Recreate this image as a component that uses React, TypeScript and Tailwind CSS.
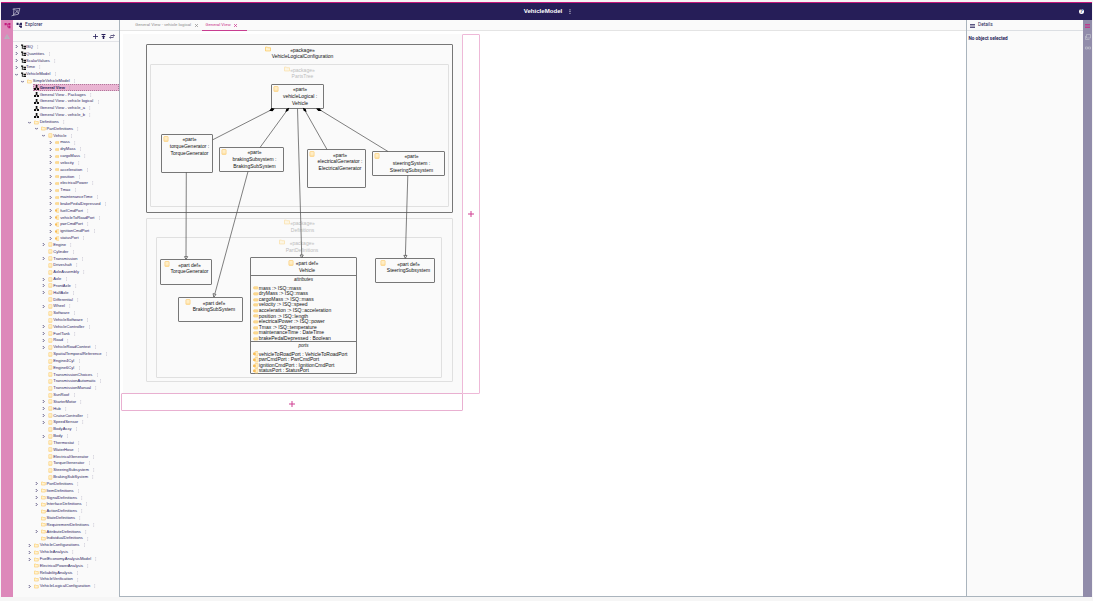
import type { ReactNode } from "react";

type IconKind = "project" | "diagram" | "folder" | "def" | "attribute" | "port";
type Row = [depth: number, icon: IconKind, expand: "" | ">" | "v", label: string];

const rows: Row[] = [
  [0, "project", ">", "ISQ"],
  [0, "project", ">", "Quantities"],
  [0, "project", ">", "ScalarValues"],
  [0, "project", ">", "Time"],
  [0, "project", "v", "VehicleModel"],
  [1, "folder", "v", "SimpleVehicleModel"],
  [2, "diagram", "", "General View"],
  [2, "diagram", "", "General View - Packages"],
  [2, "diagram", "", "General View - vehicle logical"],
  [2, "diagram", "", "General View - vehicle_a"],
  [2, "diagram", "", "General View - vehicle_b"],
  [2, "folder", "v", "Definitions"],
  [3, "folder", "v", "PartDefinitions"],
  [4, "def", "v", "Vehicle"],
  [5, "attribute", ">", "mass"],
  [5, "attribute", ">", "dryMass"],
  [5, "attribute", ">", "cargoMass"],
  [5, "attribute", ">", "velocity"],
  [5, "attribute", ">", "acceleration"],
  [5, "attribute", ">", "position"],
  [5, "attribute", ">", "electricalPower"],
  [5, "attribute", ">", "Tmax"],
  [5, "attribute", ">", "maintenanceTime"],
  [5, "attribute", ">", "brakePedalDepressed"],
  [5, "port", ">", "fuelCmdPort"],
  [5, "port", ">", "vehicleToRoadPort"],
  [5, "port", ">", "pwrCmdPort"],
  [5, "port", ">", "ignitionCmdPort"],
  [5, "port", ">", "statusPort"],
  [4, "def", ">", "Engine"],
  [4, "def", "", "Cylinder"],
  [4, "def", ">", "Transmission"],
  [4, "def", "", "Driveshaft"],
  [4, "def", "", "AxleAssembly"],
  [4, "def", ">", "Axle"],
  [4, "def", ">", "FrontAxle"],
  [4, "def", ">", "HalfAxle"],
  [4, "def", "", "Differential"],
  [4, "def", ">", "Wheel"],
  [4, "def", "", "Software"],
  [4, "def", "", "VehicleSoftware"],
  [4, "def", ">", "VehicleController"],
  [4, "def", ">", "FuelTank"],
  [4, "def", ">", "Road"],
  [4, "def", ">", "VehicleRoadContext"],
  [4, "def", "", "SpatialTemporalReference"],
  [4, "def", "", "Engine4Cyl"],
  [4, "def", "", "Engine6Cyl"],
  [4, "def", "", "TransmissionChoices"],
  [4, "def", "", "TransmissionAutomatic"],
  [4, "def", "", "TransmissionManual"],
  [4, "def", "", "SunRoof"],
  [4, "def", ">", "StarterMotor"],
  [4, "def", ">", "Hub"],
  [4, "def", ">", "CruiseController"],
  [4, "def", ">", "SpeedSensor"],
  [4, "def", "", "BodyAssy"],
  [4, "def", ">", "Body"],
  [4, "def", "", "Thermostat"],
  [4, "def", "", "WaterHose"],
  [4, "def", "", "ElectricalGenerator"],
  [4, "def", "", "TorqueGenerator"],
  [4, "def", "", "SteeringSubsystem"],
  [4, "def", "", "BrakingSubSystem"],
  [3, "folder", ">", "PortDefinitions"],
  [3, "folder", ">", "ItemDefinitions"],
  [3, "folder", ">", "SignalDefinitions"],
  [3, "folder", ">", "InterfaceDefinitions"],
  [3, "folder", "", "ActionDefinitions"],
  [3, "folder", "", "StateDefinitions"],
  [3, "folder", "", "RequirementDefinitions"],
  [3, "folder", ">", "AttributeDefinitions"],
  [3, "folder", "", "IndividualDefinitions"],
  [2, "folder", ">", "VehicleConfigurations"],
  [2, "folder", ">", "VehicleAnalysis"],
  [2, "folder", ">", "FuelEconomyAnalysisModel"],
  [2, "folder", "", "ElectricalPowerAnalysis"],
  [2, "folder", "", "ReliabilityAnalysis"],
  [2, "folder", "", "VehicleVerification"],
  [2, "folder", ">", "VehicleLogicalConfiguration"],
];

function Icon({ kind, className }: { kind: IconKind; className: string }) {
  return (
    <svg viewBox="0 0 12 12" className={`shrink-0 ${className}`}>
      {kind === "project" && (
        <path d="M0 1h5v3H4v1h2V4h6v3H6V6H4v4h2V8h6v4H6v-1H2V4H0z" fill="#111" />
      )}
      {kind === "diagram" && (
        <path d="M4 0h4v4H7l2 3h3v5H7V8L6 6 5 8v4H0V7h3l2-3H4z" fill="#111" />
      )}
      {kind === "folder" && (
        <path d="M1 2.2h3.8l1 1.3h5.2v6.4H1z" fill="#fff3d4" stroke="#fbcb66" strokeWidth="1.6" />
      )}
      {kind === "def" && (
        <>
          <rect x="1.8" y="1" width="8.4" height="10" rx="1" fill="#ffeec6" stroke="#fccf78" strokeWidth="1.4" />
          <path d="M2 8.8h8" stroke="#fbd588" strokeWidth="1" />
        </>
      )}
      {kind === "attribute" && (
        <rect x="1" y="3.7" width="9.5" height="5" rx="1.5" fill="#fddc98" stroke="#fccd70" strokeWidth="1.3" />
      )}
      {kind === "port" && (
        <>
          <rect x="3.5" y="1.2" width="7.5" height="9.6" rx="1.5" fill="#ffeec6" stroke="#fccf78" strokeWidth="1.5" />
          <rect x="0" y="3.5" width="5.5" height="5" fill="#f9bd57" />
        </>
      )}
    </svg>
  );
}

function Kebab({ className }: { className: string }) {
  return (
    <svg viewBox="0 0 4 12" className={`shrink-0 ${className}`} fill="currentColor">
      <circle cx="2" cy="2" r="1.3" />
      <circle cx="2" cy="6" r="1.3" />
      <circle cx="2" cy="10" r="1.3" />
    </svg>
  );
}

function TreeGlyph({ className }: { className: string }) {
  return (
    <svg viewBox="0 0 24 24" className={className} fill="currentColor">
      <path d="M22 11V3h-7v3H9V3H2v8h7V8h2v10h4v3h7v-8h-7v3h-2V8h2v3z" />
    </svg>
  );
}

function TreeRow({ row, selected }: { row: Row; selected: boolean }) {
  const [depth, icon, expand, label] = row;
  return (
    <div className="flex h-[6.836px] items-center pl-[1.5px]">
      <div className="shrink-0" style={{ width: depth * 6.83 }} />
      <svg viewBox="0 0 8 8" className="mr-[2px] h-[3px] w-[3px] shrink-0" fill="none" stroke="#3a3268" strokeWidth="2">
        {expand === ">" && <path d="M2 0l4 4-4 4" />}
        {expand === "v" && <path d="M0 2l4 4 4-4" />}
      </svg>
      <div
        className={
          selected
            ? "flex h-[6.8px] flex-1 items-center bg-[#e9b4d2] pl-px font-bold outline-dotted outline-1 -outline-offset-1 outline-[#b07a9b]"
            : "flex h-full flex-1 items-center pl-px"
        }
      >
        <Icon kind={icon} className={icon === "project" || icon === "diagram" ? "h-[5.2px] w-[5.2px]" : "mr-[0.5px] h-[5px] w-[4.7px]"} />
        <span className={selected ? "ml-[0.3px] whitespace-nowrap text-[4.05px] leading-none text-[#261e58]" : "ml-[0.3px] whitespace-nowrap text-[4.1px] leading-none text-[#2c2562]"}>{label}</span>
        <Kebab className="ml-[4.3px] h-[4px] w-[1.5px] text-[#a5a2b8]" />
      </div>
    </div>
  );
}

function Node({ box, className = "", children }: { box: string; className?: string; children?: ReactNode }) {
  return <div className={`absolute rounded-[1px] border ${box} ${className}`}>{children}</div>;
}

function Label({ at, icon, lines, faded = false }: { at: string; icon: string; lines: string[]; faded?: boolean }) {
  return (
    <>
      <Icon kind={lines[0] === "«package»" ? "folder" : "def"} className={`absolute h-[6px] w-[6px] ${icon} ${faded ? "opacity-50" : ""}`} />
      <div className={`absolute flex -translate-x-1/2 flex-col items-center whitespace-nowrap text-[5px] leading-[6.9px] ${at} ${faded ? "text-[#bcbcbc]" : "text-[#111]"}`}>
        {lines.map((line) => (
          <span key={line}>{line}</span>
        ))}
      </div>
    </>
  );
}

const attributes = [
  "mass :> ISQ::mass",
  "dryMass :> ISQ::mass",
  "cargoMass :> ISQ::mass",
  "velocity :> ISQ::speed",
  "acceleration :> ISQ::acceleration",
  "position :> ISQ::length",
  "electricalPower :> ISQ::power",
  "Tmax :> ISQ::temperature",
  "maintenanceTime : DateTime",
  "brakePedalDepressed : Boolean",
];
const ports = [
  "vehicleToRoadPort : VehicleToRoadPort",
  "pwrCmdPort : PwrCmdPort",
  "ignitionCmdPort : IgnitionCmdPort",
  "statusPort : StatusPort",
];

function Compartment({ title, icon, items, className }: { title: string; icon: IconKind; items: string[]; className: string }) {
  return (
    <div className={`border-t border-[#777] ${className}`}>
      <div className="h-[9.4px] pt-[1.4px] text-center text-[4.6px] leading-[6px] italic">{title}</div>
      {items.map((item) => (
        <div key={item} className="flex h-[5.6px] items-center pl-[1.6px]">
          <Icon kind={icon} className="h-[5.6px] w-[5.8px]" />
          <span className="ml-[0.4px] whitespace-nowrap text-[5px] leading-none">{item}</span>
        </div>
      ))}
    </div>
  );
}

function Diagram() {
  return (
    <div className="relative h-[359px] w-[340px] bg-[#fafafa]">
      <Node box="left-[23px] top-[10px] h-[169px] w-[307px]" className="border-[#777]" />
      <Node box="left-[27px] top-[30px] h-[143px] w-[299px]" className="border-[#e0e0e0]" />
      <Node box="left-[23px] top-[184px] h-[164px] w-[307px]" className="border-[#e0e0e0]" />
      <Node box="left-[33px] top-[203px] h-[141px] w-[286px]" className="border-[#e0e0e0]" />
      <Label at="left-[179.5px] top-[12.5px]" icon="left-[142px] top-[12px]" lines={["«package»", "VehicleLogicalConfiguration"]} />
      <Label faded at="left-[179.5px] top-[32.5px]" icon="left-[161px] top-[32px]" lines={["«package»", "PartsTree"]} />
      <Label faded at="left-[179.5px] top-[186px]" icon="left-[161px] top-[185px]" lines={["«package»", "Definitions"]} />
      <Label faded at="left-[179px] top-[206px]" icon="left-[156px] top-[205px]" lines={["«package»", "PartDefinitions"]} />

      <Node box="left-[148px] top-[50px] h-[25px] w-[53px]" className="border-[#777] bg-[#fafafa]" />
      <Node box="left-[38px] top-[100px] h-[39px] w-[52px]" className="border-[#777] bg-[#fafafa]" />
      <Node box="left-[96px] top-[113px] h-[25px] w-[65px]" className="border-[#777] bg-[#fafafa]" />
      <Node box="left-[184px] top-[115px] h-[39px] w-[59px]" className="border-[#777] bg-[#fafafa]" />
      <Node box="left-[249px] top-[117px] h-[25px] w-[73px]" className="border-[#777] bg-[#fafafa]" />
      <Node box="left-[37px] top-[225px] h-[26px] w-[52px]" className="border-[#777] bg-[#fafafa]" />
      <Node box="left-[55px] top-[263px] h-[25px] w-[65px]" className="border-[#777] bg-[#fafafa]" />
      <Node box="left-[252px] top-[224px] h-[25px] w-[60px]" className="border-[#777] bg-[#fafafa]" />
      <Node box="left-[127px] top-[223px] h-[117px] w-[107px]" className="flex flex-col border-[#777] bg-[#fafafa] pt-[17px] text-[#111]">
        <Compartment title="attributes" icon="attribute" items={attributes} className="h-[66px]" />
        <Compartment title="ports" icon="port" items={ports} className="flex-1" />
      </Node>

      <Label at="left-[177px] top-[52px]" icon="left-[150px] top-[51.5px]" lines={["«part»", "vehicleLogical :", "Vehicle"]} />
      <Label at="left-[66.5px] top-[102px]" icon="left-[39.5px] top-[101.5px]" lines={["«part»", "torqueGenerator :", "TorqueGenerator"]} />
      <Label at="left-[131.5px] top-[115px]" icon="left-[98px] top-[115px]" lines={["«part»", "brakingSubsystem :", "BrakingSubSystem"]} />
      <Label at="left-[217px] top-[117.5px]" icon="left-[186px] top-[117px]" lines={["«part»", "electricalGenerator :", "ElectricalGenerator"]} />
      <Label at="left-[288.5px] top-[119px]" icon="left-[251px] top-[119px]" lines={["«part»", "steeringSystem :", "SteeringSubsystem"]} />
      <Label at="left-[66.5px] top-[227.5px]" icon="left-[41px] top-[227px]" lines={["«part def»", "TorqueGenerator"]} />
      <Label at="left-[91px] top-[265.5px]" icon="left-[62px] top-[265px]" lines={["«part def»", "BrakingSubSystem"]} />
      <Label at="left-[184px] top-[226px]" icon="left-[165px] top-[225.5px]" lines={["«part def»", "Vehicle"]} />
      <Label at="left-[285.5px] top-[226.5px]" icon="left-[256.5px] top-[226px]" lines={["«part def»", "SteeringSubsystem"]} />

      <svg className="absolute inset-0 h-[359px] w-[340px]" viewBox="123 34 340 359" fill="none" stroke="#555" strokeWidth="0.75">
        <path d="M271.5 109.7L212.7 139.8M287.3 110L260 147.5M297.5 108.7L301.8 258M304.7 110L327 149.5M319 109.3L388 151.5M186.3 172.3L186 259.5M248 171.5L214 297M407.8 175.5L405.3 258.5" />
        <g fill="#000" stroke="#000" strokeWidth="1.3">
          <path d="M270.4 110.3l1.2-1.5 1.8.3-1.2 1.4zM286.4 111l.4-1.6 1.4-.6-.4 1.6zM305.6 111l-.4-1.6-1.4-.6.4 1.6zM320.4 110.3l-1.2-1.4-1.8.1 1.2 1.4z" />
        </g>
        <g strokeWidth="0.8" fill="#fafafa">
          <path d="M184.5 256.6h3.2l-1.7 2.8zM213 293.6l3 .9-2.2 2.5zM300.1 255h3.2l-1.6 2.8zM403.8 255.4h3.2l-1.6 2.8z" />
        </g>
      </svg>
    </div>
  );
}

function Plus() {
  return (
    <svg viewBox="0 0 6 6" className="h-[6px] w-[6px]" stroke="#cf3f92" strokeWidth="1">
      <path d="M3 0v6M0 3h6" />
    </svg>
  );
}

export default function App() {
  return (
    <div className="flex h-[601px] w-[1093px] flex-col overflow-hidden bg-[#f6f6f6] pt-[2px] pr-[1px] pl-[1px] font-['Liberation_Sans',sans-serif]">
      <header className="grid h-[18px] shrink-0 grid-cols-[1fr_auto_1fr] items-center border-t border-[#c5177c] bg-[#261e58] pr-[8px] pl-[10px] text-white">
        <svg viewBox="0 0 18 18" className="h-[10px] w-[10px]" fill="none" stroke="#d8d6e4" strokeWidth="1.2">
          <path d="M5.5 2.5L4.5 14M3 4l13-1.5-3 10.5-9 2M4.5 14.5l8.5-9M1 16l4-1.5M8 5l6 7" />
        </svg>
        <div className="flex items-center">
          <span className="text-[6.1px] leading-none font-bold">VehicleModel</span>
          <Kebab className="ml-[7px] h-[5px] w-[2px]" />
        </div>
        <div className="flex h-[5.5px] w-[5.5px] items-center justify-center justify-self-end rounded-full bg-white text-[5px] leading-none font-bold text-[#261e58]">?</div>
      </header>

      <div className="flex h-[576.5px] shrink-0">
        <aside className="flex w-[12px] shrink-0 flex-col items-center bg-[#dd88ba]">
          <div className="flex h-[11px] w-full items-center justify-center">
            <TreeGlyph className="h-[7px] w-[7px] text-[#c2187c]" />
          </div>
          <svg viewBox="0 0 12 10" className="mt-[3px] h-[5px] w-[6px]">
            <path d="M6 0l6 10H0z" fill="#b5b3bd" />
            <path d="M6 4v5" stroke="#dd88ba" />
          </svg>
        </aside>

        <section className="flex w-[107px] shrink-0 flex-col border-r border-[#aab4bd] bg-[#fafafa] text-[#261e58]">
          <div className="flex h-[11px] shrink-0 items-center border-b border-[#dcdfe3] pt-px pl-[3px]">
            <TreeGlyph className="h-[6.5px] w-[6.5px]" />
            <span className="ml-[2.5px] font-['Roboto',sans-serif] text-[4.8px] leading-none">Explorer</span>
          </div>
          <div className="flex h-[11px] shrink-0 items-center justify-end gap-[3px] border-b border-[#e3e4e8] pr-[4px]">
            <svg viewBox="0 0 10 10" className="h-[5px] w-[5px]" stroke="currentColor" strokeWidth="1.6"><path d="M5 0v10M0 5h10" /></svg>
            <svg viewBox="0 0 10 10" className="h-[5px] w-[5px]" fill="currentColor"><path d="M1 0h8v2H1zM5 2.5L9 6H6.5v4h-3V6H1z" /></svg>
            <svg viewBox="0 0 12 10" className="h-[5px] w-[6px]" fill="none" stroke="currentColor" strokeWidth="1.4"><path d="M3 3h7M9 1l2 2-2 2M9 7H2M3 5L1 7l2 2" /></svg>
          </div>
          <div className="flex flex-col pt-[1.5px]">
            {rows.map((row) => (
              <TreeRow key={`${row[0]}-${row[3]}`} row={row} selected={row[3] === "General View"} />
            ))}
          </div>
        </section>

        <main className="flex w-[846px] shrink-0 flex-col border-b border-[#aab4bd] bg-white">
          <div className="flex h-[11px] shrink-0 border-b border-[#e4e4e4] bg-[#fafafa] pl-[11px] font-['Roboto',sans-serif] text-[4.35px] leading-none">
            <div className="flex w-[71px] items-center justify-center gap-[3.5px] pt-px text-[#8f8f8f]">
              <span className="whitespace-nowrap">General View - vehicle logical</span>
              <svg viewBox="0 0 6 6" className="h-[3px] w-[3px]" stroke="currentColor" strokeWidth="1.4"><path d="M0 0l6 6M6 0L0 6" /></svg>
            </div>
            <div className="flex h-[11px] w-[45px] items-center gap-[3px] border-b border-[#c83d90] pt-px pl-[3.5px] text-[#c8358c]">
              <span className="whitespace-nowrap">General View</span>
              <svg viewBox="0 0 6 6" className="h-[3px] w-[3px]" stroke="currentColor" strokeWidth="1.4"><path d="M0 0l6 6M6 0L0 6" /></svg>
            </div>
          </div>
          <div className="flex pt-[3px]">
            <div className="flex w-[343px] flex-col pl-[1px]">
              <div className="pl-[2px]">
                <Diagram />
              </div>
              <div className="flex h-[18px] items-center justify-center rounded-[1px] border border-[#e9b0d1] pt-[3px]">
                <Plus />
              </div>
            </div>
            <div className="z-10 -ml-px flex h-[360px] w-[18px] items-center justify-center rounded-[1px] border border-[#eeb9d8]">
              <Plus />
            </div>
          </div>
        </main>

        <section className="flex w-[117px] shrink-0 flex-col border-b border-l border-[#aab4bd] bg-[#fafafa] font-['Roboto',sans-serif] text-[#261e58]">
          <div className="flex h-[11px] shrink-0 items-center border-b border-[#dcdfe3] pt-px pl-[3px]">
            <svg viewBox="0 0 10 8" className="h-[4px] w-[5px]" fill="currentColor"><path d="M0 0h10v3H0zM0 5h10v3H0z" opacity=".75" /></svg>
            <span className="ml-[3px] text-[4.8px] leading-none">Details</span>
          </div>
          <div className="pt-[4.5px] pl-[1.5px] text-[4.7px] leading-[5px] font-bold">No object selected</div>
        </section>

        <aside className="flex w-[9px] shrink-0 flex-col items-center bg-[#918caa]">
          <svg viewBox="0 0 10 8" className="mt-[4px] h-[4px] w-[5px]" fill="#bb3c8d"><path d="M0 0h10v3H0zM0 5h10v3H0z" /></svg>
          <svg viewBox="0 0 12 12" className="mt-[6px] h-[6px] w-[6px]" fill="none" stroke="#bcbcc8" strokeWidth="1.5"><path d="M3 1h8v7H3zM1 4v7h8" /></svg>
          <svg viewBox="0 0 12 8" className="mt-[6px] h-[4px] w-[6px]" fill="none" stroke="#bcbcc8" strokeWidth="1.5"><path d="M1 2h4v4H1zM7 2h4v4H7z" /></svg>
        </aside>
      </div>
    </div>
  );
}
